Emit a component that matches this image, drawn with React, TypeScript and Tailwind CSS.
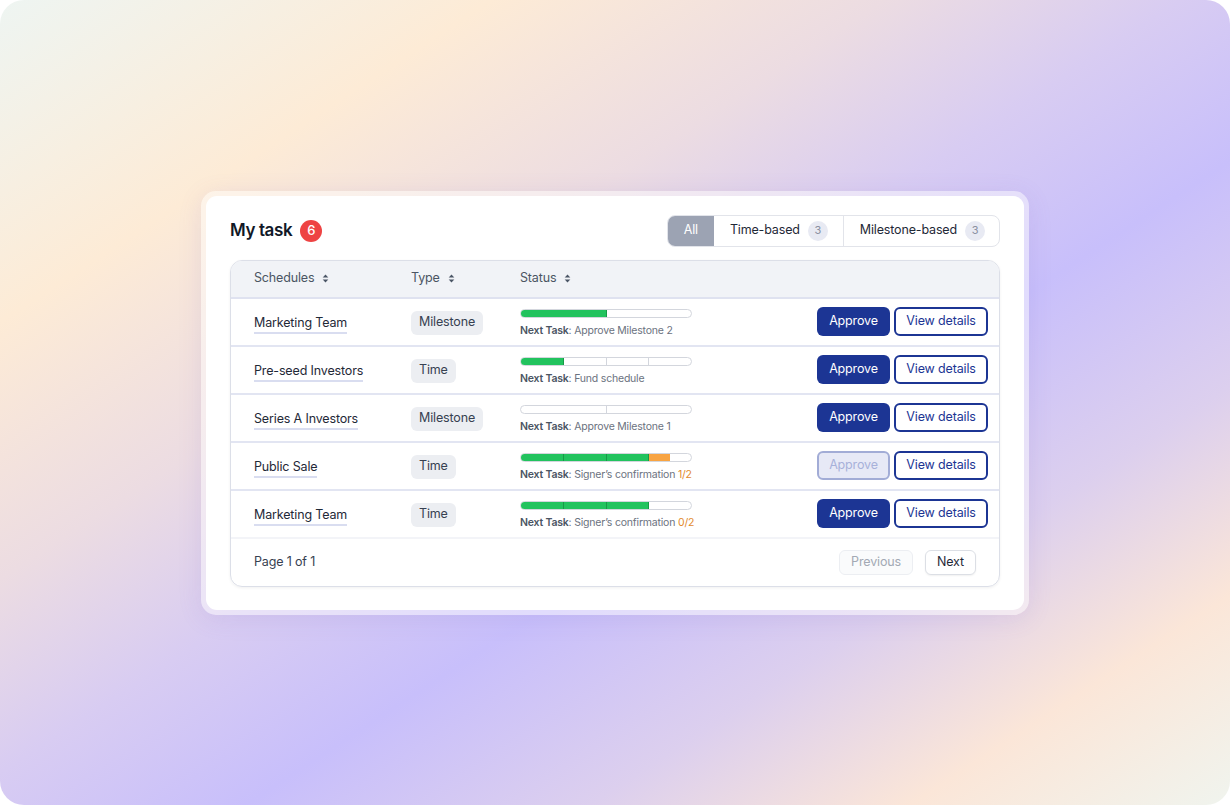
type Seg = { green: number; orange?: number };

type Row = {
  name: string;
  type: 'Milestone' | 'Time';
  segs: Seg[];
  task: string;
  count?: string;
  disabled?: boolean;
};

const rows: Row[] = [
  {
    name: 'Marketing Team',
    type: 'Milestone',
    segs: [{ green: 1 }, { green: 0 }],
    task: 'Approve Milestone 2',
  },
  {
    name: 'Pre-seed Investors',
    type: 'Time',
    segs: [{ green: 1 }, { green: 0 }, { green: 0 }, { green: 0 }],
    task: 'Fund schedule',
  },
  {
    name: 'Series A Investors',
    type: 'Milestone',
    segs: [{ green: 0 }, { green: 0 }],
    task: 'Approve Milestone 1',
  },
  {
    name: 'Public Sale',
    type: 'Time',
    segs: [{ green: 1 }, { green: 1 }, { green: 1 }, { green: 0, orange: 0.5 }],
    task: 'Signer’s confirmation',
    count: '1/2',
    disabled: true,
  },
  {
    name: 'Marketing Team',
    type: 'Time',
    segs: [{ green: 1 }, { green: 1 }, { green: 1 }, { green: 0 }],
    task: 'Signer’s confirmation',
    count: '0/2',
  },
];

const SortIcon = () => (
  <svg width="7" height="9" viewBox="0 0 7 9" className="ml-2 text-gray-600">
    <path d="M3.5 0.5 L6.3 3.6 H0.7 Z" fill="currentColor" />
    <path d="M3.5 8.5 L6.3 5.4 H0.7 Z" fill="currentColor" />
  </svg>
);

const ProgressBar = ({ segs }: { segs: Seg[] }) => (
  <div className="flex h-[9px] w-[172px] overflow-hidden rounded-full border border-[#d3d6dd] bg-white">
    {segs.map((s, i) => {
      const prevGreen = i > 0 && segs[i - 1].green === 1;
      const divider =
        i === 0 ? '' : prevGreen ? 'border-l border-[#179a47]' : 'border-l border-[#d3d6dd]';
      return (
        <div key={i} className={`flex h-full flex-1 ${divider}`}>
          {s.green > 0 && <div className="h-full bg-[#22c35e]" style={{ width: `${s.green * 100}%` }} />}
          {s.orange && <div className="h-full bg-[#f8a442]" style={{ width: `${s.orange * 100}%` }} />}
        </div>
      );
    })}
  </div>
);

const CountBadge = ({ n }: { n: number }) => (
  <span className="ml-2 flex h-5 w-5 items-center justify-center rounded-full bg-[#e8eaf3] text-[11px] text-[#8a90a0]">
    {n}
  </span>
);

export default function App() {
  return (
    <div
      className="flex h-[805px] w-[1230px] items-center justify-center overflow-hidden rounded-[24px] bg-[linear-gradient(to_bottom_right,#eef5f2_0%,#fdebd6_20%,#ecdce2_36%,#d8ccf2_48%,#c8bffb_60%,#dccfee_74%,#fbe6d8_87%,#f0f4ee_100%)] tracking-[-0.15px]"
      style={{ fontFamily: 'Inter, "Liberation Sans", sans-serif' }}
    >
      {/* translucent ring around the card */}
      <div className="rounded-[15px] bg-white/45 p-[5px] shadow-[0_4px_24px_rgba(120,100,200,0.12)]">
        <div className="w-[818px] rounded-[11px] bg-white px-6 pb-[23px] pt-[19px]">
          {/* Heading + filter */}
          <div className="flex items-center justify-between">
            <div className="flex items-center">
              <h2 className="text-[17px] font-semibold tracking-[-0.4px] text-[#111827]">My task</h2>
              <span className="ml-2 flex h-[22px] w-[22px] items-center justify-center rounded-full bg-[#ee4343] text-[13px] font-medium text-white">
                6
              </span>
            </div>
            <div className="flex h-8 items-stretch overflow-hidden rounded-lg border-[1.5px] border-[#e2e4ea] text-[12.5px] text-[#1f2937]">
              <button className="flex w-[46px] items-center justify-center bg-[#9ca3b3] text-white">All</button>
              <button className="flex items-center border-r border-[#e2e4ea] pl-4 pr-[15px]">
                Time-based
                <CountBadge n={3} />
              </button>
              <button className="flex items-center pl-4 pr-[14px]">
                Milestone-based
                <CountBadge n={3} />
              </button>
            </div>
          </div>

          {/* Table */}
          <div className="mt-[13px] overflow-hidden rounded-xl border-[1.5px] border-[#dcdfe8] shadow-[0_1px_3px_rgba(0,0,0,0.06)]">
            <div className="flex h-[38px] items-center border-b-2 border-[#dfe2f0] bg-[#f1f3f7] pl-[23px] text-[12.5px] text-[#4b5563]">
              <div className="flex w-[157px] items-center">
                Schedules
                <SortIcon />
              </div>
              <div className="flex w-[109px] items-center">
                Type
                <SortIcon />
              </div>
              <div className="flex items-center">
                Status
                <SortIcon />
              </div>
            </div>

            {rows.map((r, i) => (
              <div
                key={i}
                className={`flex h-[48px] items-center border-b-2 pl-[23px] pr-[11px] ${
                  i === rows.length - 1 ? 'border-[#f3f4f8]' : 'border-[#e2e5f2]'
                }`}
              >
                <div className="w-[157px]">
                  <span className="inline-block border-b-2 border-[#d9ddf0] pb-[1px] text-[12.5px] leading-4 text-[#1f2937]">
                    {r.name}
                  </span>
                </div>
                <div className="w-[109px]">
                  <span className="inline-flex h-6 items-center rounded-md bg-[#eceef2] px-2 text-[12.5px] text-[#374151]">
                    {r.type}
                  </span>
                </div>
                <div className="flex flex-col gap-[6px] pt-[3px]">
                  <ProgressBar segs={r.segs} />
                  <p className="text-[10.5px] leading-[13px] tracking-[-0.2px] text-[#6b7280]">
                    <span className="font-semibold text-[#4b5563]">Next Task</span>: {r.task}
                    {r.count && <span className="text-[#e28a2c]"> {r.count}</span>}
                  </p>
                </div>
                <div className="ml-auto flex items-center gap-1">
                  {r.disabled ? (
                    <button className="h-[29px] w-[73px] rounded-md border-2 border-[#a2acd6] bg-[#e7e9f6] text-[12.5px] text-[#a8b1da]">
                      Approve
                    </button>
                  ) : (
                    <button className="h-[29px] w-[73px] rounded-md bg-[#1c3594] text-[12.5px] text-white">
                      Approve
                    </button>
                  )}
                  <button className="h-[29px] w-[94px] rounded-md border-2 border-[#1c3594] bg-white text-[12.5px] text-[#1c3594]">
                    View details
                  </button>
                </div>
              </div>
            ))}

            {/* Pagination */}
            <div className="flex h-[47px] items-center justify-between px-[23px]">
              <span className="text-[12.5px] text-[#374151]">Page 1 of 1</span>
              <div className="flex items-center gap-3">
                <button className="h-[25px] w-[74px] rounded-md border border-[#eceef2] bg-[#fafbfc] text-[12.5px] text-[#a3a9b4]">
                  Previous
                </button>
                <button className="h-[25px] w-[51px] rounded-md border border-[#dcdfe5] bg-white text-[12.5px] text-[#1f2937] shadow-[0_1px_2px_rgba(0,0,0,0.06)]">
                  Next
                </button>
              </div>
            </div>
          </div>
        </div>
      </div>
    </div>
  );
}
